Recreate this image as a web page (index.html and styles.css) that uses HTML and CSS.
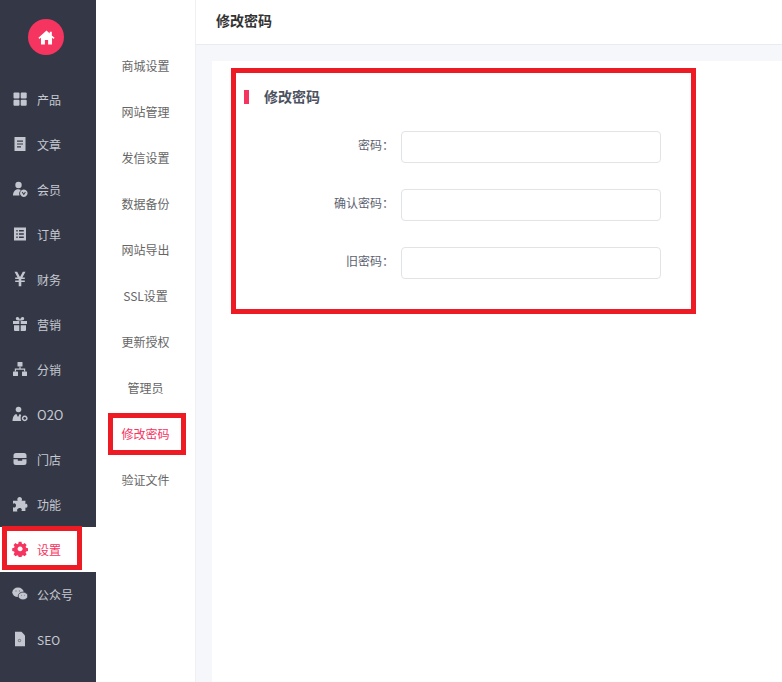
FILE: index.html
```html
<!DOCTYPE html>
<html lang="zh-CN">
<head>
  <meta charset="UTF-8">
  <meta name="viewport" content="width=device-width, initial-scale=1.0">
  <title>修改密码</title>
  <link rel="stylesheet" href="styles.css">
</head>
<body>
  <div class="layout">
    <div class="side">
      <div class="logo-wrap">
        <div class="logo">
          <svg viewBox="0 0 16 16" width="17" height="17"><path d="M8 1.500L0.400 8.300l1 1.100L2.800 8.200v6.300h3.700V10.300h3v4.200h3.700V8.200l1.400 1.200 1-1.100L13 6.100V2.500h-2v1.800z" fill="#fff"/></svg>
        </div>
      </div>
      <ul class="side-menu">
        <li class="side-item">
          <svg viewBox="0 0 16 16"><rect x="1.500" y="1.500" width="6" height="6" rx="1"/><rect x="8.700" y="1.500" width="6" height="6" rx="1"/><rect x="1.500" y="8.700" width="6" height="6" rx="1"/><rect x="8.700" y="8.700" width="6" height="6" rx="1"/></svg>
          <span>产品</span>
        </li>
        <li class="side-item">
          <svg viewBox="0 0 16 16"><path fill-rule="evenodd" d="M2.500 1h11v14h-11z M5 4.500v1.200h6V4.500z M5 7.400v1.200h6V7.400z M5 10.300v1.200h4v-1.200z"/></svg>
          <span>文章</span>
        </li>
        <li class="side-item">
          <svg viewBox="0 0 16 16"><circle cx="6.500" cy="4" r="3.200"/><path d="M1 14.500c0-3.800 2.200-6.300 5-6.300 1.200 0 2.200 0.300 3 0.900-1.500 1-2.300 3.400-1.500 5.400z"/><path fill-rule="evenodd" d="M11.800 8.500a3.700 3.700 0 1 0 0.010 0z M9.800 11.300l0.800-0.500 1.200 1.800 1.200-1.800 0.800 0.500-2 2.900z"/></svg>
          <span>会员</span>
        </li>
        <li class="side-item">
          <svg viewBox="0 0 16 16"><path fill-rule="evenodd" d="M2 1.500h12v13H2z M4.300 4v1.500h1.400V4z M7 4v1.500h4.800V4z M4.300 7.200v1.500h1.400V7.200z M7 7.200v1.500h4.800V7.200z M4.300 10.400v1.500h1.400v-1.500z M7 10.400v1.500h4.800v-1.500z"/></svg>
          <span>订单</span>
        </li>
        <li class="side-item">
          <svg viewBox="0 0 16 16"><path d="M2.500 0.800h2.700L8 6l2.800-5.200h2.700L10.400 6.500h2.400v1.600H9.300v1.300h3.500V11H9.300v4.200H6.700V11H3.200V9.400h3.500V8.100H3.200V6.500h2.400z"/></svg>
          <span>财务</span>
        </li>
        <li class="side-item">
          <svg viewBox="0 0 16 16"><path d="M1 5h6.300v3H1z M8.700 5H15v3H8.700z M2 9.200h5.300V15H3a1 1 0 0 1-1-1z M8.700 9.200H14V14a1 1 0 0 1-1 1H8.700z"/><path d="M8 4.600C6 4.600 3.800 4.200 3.800 2.700 3.800 1.600 4.600 1 5.400 1 6.800 1 7.700 2.800 8 4 8.300 2.800 9.200 1 10.600 1c0.800 0 1.600 0.600 1.600 1.700C12.200 4.200 10 4.600 8 4.600z"/></svg>
          <span>营销</span>
        </li>
        <li class="side-item">
          <svg viewBox="0 0 16 16"><rect x="5.500" y="1" width="5" height="4.500" rx="0.600"/><rect x="1" y="10.500" width="5" height="4.500" rx="0.600"/><rect x="10" y="10.500" width="5" height="4.500" rx="0.600"/><path d="M7.400 5.500h1.200v2h4.600v3H12V8.700H4v1.800H2.800v-3h4.600z"/></svg>
          <span>分销</span>
        </li>
        <li class="side-item">
          <svg viewBox="0 0 16 16"><circle cx="6.500" cy="3.500" r="2.800"/><path d="M0.500 15c0.200-3.500 1.500-6.600 3.900-7L6 11l1.700-3c0.600 0.200 1.100 0.500 1.500 1-0.700 1.700-0.800 4.200 0 6z"/><path fill-rule="evenodd" d="M12.700 9.500a2.900 2.900 0 1 0 0.010 0z M12.700 11a1.400 1.400 0 1 1-0.010 0z"/></svg>
          <span class="wide">O2O</span>
        </li>
        <li class="side-item">
          <svg viewBox="0 0 16 16"><path d="M4 2h8a2.500 2.500 0 0 1 2.500 2.500V7h-13V4.500A2.500 2.500 0 0 1 4 2z"/><path d="M1.500 8.200h4.300v1.500h4.400V8.200h4.300V11.500A2.500 2.500 0 0 1 12 14H4a2.500 2.500 0 0 1-2.500-2.500z"/></svg>
          <span>门店</span>
        </li>
        <li class="side-item">
          <svg viewBox="0 0 16 16"><path d="M5.800 3.500c0-1.400 1-2.500 2.400-2.500s2.300 1 2.300 2.300c0 0.500-0.200 1-0.400 1.400h3.800v3.500c0.500-0.300 0.900-0.400 1.300-0.300 0.500 0.100 0.800 1 0.800 1.800 0 1-0.500 2-1.300 2-0.300 0-0.500 0-0.800-0.200v3.500h-4c0.300-0.500 0.400-0.900 0.400-1.300 0-1-1-1.700-2.200-1.700S5.600 13 5.600 14c0 0.400 0.100 0.800 0.300 1.500H1.500v-4.300c0.500 0.300 0.900 0.400 1.300 0.400 1 0 1.700-1 1.700-2.100 0-1.200-0.700-2.200-1.700-2.200-0.400 0-0.800 0.200-1.300 0.500V4.700h4.700c-0.200-0.400-0.400-0.800-0.400-1.200z" transform="translate(-0.500 0)"/></svg>
          <span>功能</span>
        </li>
        <li class="side-item on">
          <svg viewBox="0 0 16 16"><path fill-rule="evenodd" d="M6.500 0.800h3l0.400 2 1.200 0.500 1.700-1.100 2.100 2.100-1.100 1.700 0.500 1.200 2 0.400v3l-2 0.400-0.500 1.200 1.100 1.700-2.100 2.100-1.700-1.100-1.200 0.500-0.400 2h-3l-0.400-2-1.200-0.500-1.700 1.100-2.100-2.100 1.100-1.700-0.500-1.200-2-0.400v-3l2-0.400 0.500-1.200-1.100-1.700 2.100-2.100 1.700 1.100 1.200-0.500z M8 5.700a2.600 2.600 0 1 0 0.010 0z" transform="translate(0.500 0) scale(0.950)"/></svg>
          <span>设置</span>
          <div class="mark mark-side"></div>
        </li>
        <li class="side-item">
          <svg viewBox="0 0 16 16"><ellipse cx="6" cy="6.300" rx="5.700" ry="4.800"/><ellipse class="bubble" cx="11" cy="10" rx="4.800" ry="3.900"/><circle class="dot" cx="4" cy="5" r="0.700"/><circle class="dot" cx="7.500" cy="5" r="0.700"/><circle class="dot" cx="9.500" cy="9.300" r="0.500"/><circle class="dot" cx="12.500" cy="9.300" r="0.500"/></svg>
          <span>公众号</span>
        </li>
        <li class="side-item">
          <svg viewBox="0 0 16 16"><path d="M3 0.800h6.500l3.500 3.700V15.200H3z"/><circle class="dot" cx="7.500" cy="9.500" r="1.700"/><circle cx="7.500" cy="9.500" r="0.800"/></svg>
          <span>SEO</span>
        </li>
      </ul>
    </div>

    <ul class="sub-menu">
      <li>商城设置</li>
      <li>网站管理</li>
      <li>发信设置</li>
      <li>数据备份</li>
      <li>网站导出</li>
      <li>SSL设置</li>
      <li>更新授权</li>
      <li>管理员</li>
      <li class="on">修改密码<div class="mark mark-sub"></div></li>
      <li>验证文件</li>
    </ul>

    <div class="main">
      <div class="top-bar">修改密码</div>
      <div class="content">
        <div class="card">
          <div class="mark mark-form"></div>
          <div class="card-title">修改密码</div>
          <div class="form-row">
            <label for="pwd">密码：</label>
            <input id="pwd" type="password">
          </div>
          <div class="form-row">
            <label for="pwd2">确认密码：</label>
            <input id="pwd2" type="password">
          </div>
          <div class="form-row">
            <label for="oldPwd">旧密码：</label>
            <input id="oldPwd" type="password">
          </div>
        </div>
      </div>
    </div>
  </div>
</body>
</html>
```
FILE: styles.css
```css
html, body {
  height: 100%;
}

body {
  margin: 0;
  font-family: "Noto Sans CJK SC", "Noto Sans", sans-serif;
  font-size: 12px;
  color: #666;
  background-color: #fff;
  overflow: hidden;
}

ul {
  list-style: none;
  margin: 0;
  padding: 0;
}

.layout {
  display: flex;
  height: 100%;
}

/* left dark bar */
.side {
  width: 96px;
  flex-shrink: 0;
  background-color: #343846;
}

.logo-wrap {
  height: 77px;
  padding-top: 19px;
  box-sizing: border-box;
}

.logo {
  width: 36px;
  height: 36px;
  margin-left: 28px;
  border-radius: 50%;
  background-color: #f5345f;
  display: flex;
  align-items: center;
  justify-content: center;
}

.side-item {
  position: relative;
  height: 45px;
  display: flex;
  align-items: center;
  padding-left: 12px;
  color: #c6c9d1;
}

.side-item svg {
  width: 16px;
  height: 16px;
  margin-right: 9px;
  margin-top: -1px;
  fill: #c3c6ce;
}

.side-item span {
  line-height: 18px;
  padding-top: 1px;
}

.side-item svg .dot {
  fill: #7d808a;
}

.side-item svg .bubble {
  stroke: #343846;
  stroke-width: 0.8;
}

.side-item .wide {
  font-size: 13px;
}

.side-item.on {
  background-color: #fff;
  color: #f5345f;
}

.side-item.on svg {
  fill: #f5345f;
}

/* second column */
.sub-menu {
  width: 99px;
  flex-shrink: 0;
  padding-top: 43px;
  border-right: 1px solid #eef0f4;
}

.sub-menu li {
  position: relative;
  height: 46px;
  line-height: 46px;
  text-align: center;
}

.sub-menu li.on {
  color: #f5345f;
}

/* right part */
.main {
  flex: 1;
  display: flex;
  flex-direction: column;
  min-width: 0;
}

.top-bar {
  height: 44px;
  line-height: 40px;
  padding-left: 20px;
  font-size: 14px;
  font-weight: bold;
  color: #333;
  border-bottom: 1px solid #e9ebef;
}

.content {
  flex: 1;
  background-color: #f6f7fb;
  padding: 16px 0 0 16px;
}

.card {
  position: relative;
  height: 100%;
  background-color: #fff;
  padding-top: 29px;
  box-sizing: border-box;
}

.card-title {
  height: 14px;
  line-height: 12px;
  margin-left: 32px;
  margin-bottom: 27px;
  padding-left: 15px;
  font-size: 14px;
  font-weight: bold;
  color: #4c5160;
  border-left: 5px solid #f5345f;
}

.form-row {
  display: flex;
  align-items: center;
  margin-bottom: 26px;
}

.form-row label {
  width: 182px;
  text-align: right;
  color: #5c6170;
  margin-right: 7px;
  margin-top: -5px;
}

.form-row input {
  width: 260px;
  height: 32px;
  box-sizing: border-box;
  border: 1px solid #e2e3e6;
  border-radius: 4px;
  background-color: #fff;
  outline: none;
}

/* red annotation boxes drawn over the screenshot */
.mark {
  position: absolute;
  border: 5px solid #ed1c24;
  box-sizing: border-box;
  pointer-events: none;
}

.mark-side {
  left: 2px;
  top: -1px;
  width: 80px;
  height: 44px;
}

.mark-sub {
  left: 12px;
  top: 2px;
  width: 78px;
  height: 42px;
}

.mark-form {
  left: 19px;
  top: 7px;
  width: 465px;
  height: 246px;
}
```
